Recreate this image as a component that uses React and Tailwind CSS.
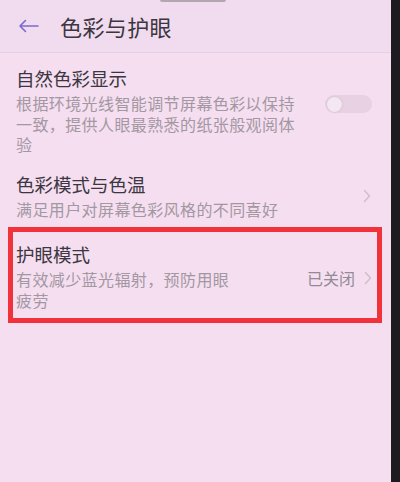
import React from 'react';

// 色彩与护眼 设置页
const FONT = { fontFamily: '"Noto Sans CJK SC", "Noto Sans", sans-serif' };

function Chevron() {
  return (
    <svg width="8" height="14" viewBox="0 0 8 14" fill="none">
      <path d="M1.5 1.5 L6.5 7 L1.5 12.5" stroke="#cdbfca" strokeWidth="1.4" strokeLinecap="round" strokeLinejoin="round" />
    </svg>
  );
}

function Toggle() {
  return (
    <div className="flex h-[18px] w-[47px] items-center rounded-full bg-[#e7d1e3] px-[2px]">
      <div className="h-[15px] w-[15px] rounded-full bg-[#f4e7f2] shadow-[0_0_2px_rgba(120,90,120,0.25)]" />
    </div>
  );
}

const App = () => {
  return (
    <div className="flex h-[482px] w-[400px] overflow-hidden bg-[#f4def0]" style={FONT}>
      <div className="flex min-w-0 flex-1 flex-col">
        {/* 顶部 */}
        <div className="relative flex h-[53px] items-center border-b border-[#e6d0e2] bg-[#f0dcee]">
          <div className="absolute left-[160px] top-0 h-[2px] w-[66px] rounded-b bg-[#b3a6b1]" />
          <svg className="ml-[18px]" width="21" height="14" viewBox="0 0 21 14" fill="none">
            <path d="M20 7 H2 M7.5 1.5 L2 7 L7.5 12.5" stroke="#7a6ccf" strokeWidth="1.6" strokeLinecap="round" strokeLinejoin="round" />
          </svg>
          <h1 className="ml-[21px] text-[22px] leading-[28px] tracking-[0.4px] text-[#3b3640]">色彩与护眼</h1>
        </div>

        {/* 自然色彩显示 */}
        <div className="flex items-start pl-4 pr-[19px] pt-[13px]">
          <div className="flex-1">
            <p className="text-[18.5px] leading-[24px] text-[#3b3640]">自然色彩显示</p>
            <p className="mt-[3px] w-[285px] text-[16px] leading-[20.5px] tracking-[0.4px] text-[#a397a2]">
              根据环境光线智能调节屏幕色彩以保持一致，提供人眼最熟悉的纸张般观阅体验
            </p>
          </div>
          <div className="mt-[29px]"><Toggle /></div>
        </div>

        {/* 色彩模式与色温 */}
        <div className="mt-[17px] flex items-center pl-4 pr-[20px]">
          <div className="flex-1">
            <p className="text-[18.5px] leading-[24px] text-[#3b3640]">色彩模式与色温</p>
            <p className="mt-[3px] text-[16px] leading-[21px] tracking-[0.4px] text-[#a397a2]">满足用户对屏幕色彩风格的不同喜好</p>
          </div>
          <Chevron />
        </div>

        {/* 护眼模式（红框标注） */}
        <div className="ml-2 mt-[7px] h-[96px] w-[374px] border-[5px] border-[#f2323a] pl-[3px] pr-[5px] pt-[10px]">
          <div className="flex items-start">
            <div className="flex-1">
              <p className="text-[18.5px] leading-[24px] text-[#3b3640]">护眼模式</p>
              <p className="mt-[3px] w-[222px] text-[16px] leading-[21px] tracking-[0.4px] text-[#a397a2]">
                有效减少蓝光辐射，预防用眼疲劳
              </p>
            </div>
            <div className="mt-[26px] flex items-center gap-[9px]">
              <span className="text-[16px] leading-[21px] text-[#938a95]">已关闭</span>
              <Chevron />
            </div>
          </div>
        </div>
      </div>
      <div className="w-[9px] bg-[#1d1b20]" />
    </div>
  );
};

export default App;
